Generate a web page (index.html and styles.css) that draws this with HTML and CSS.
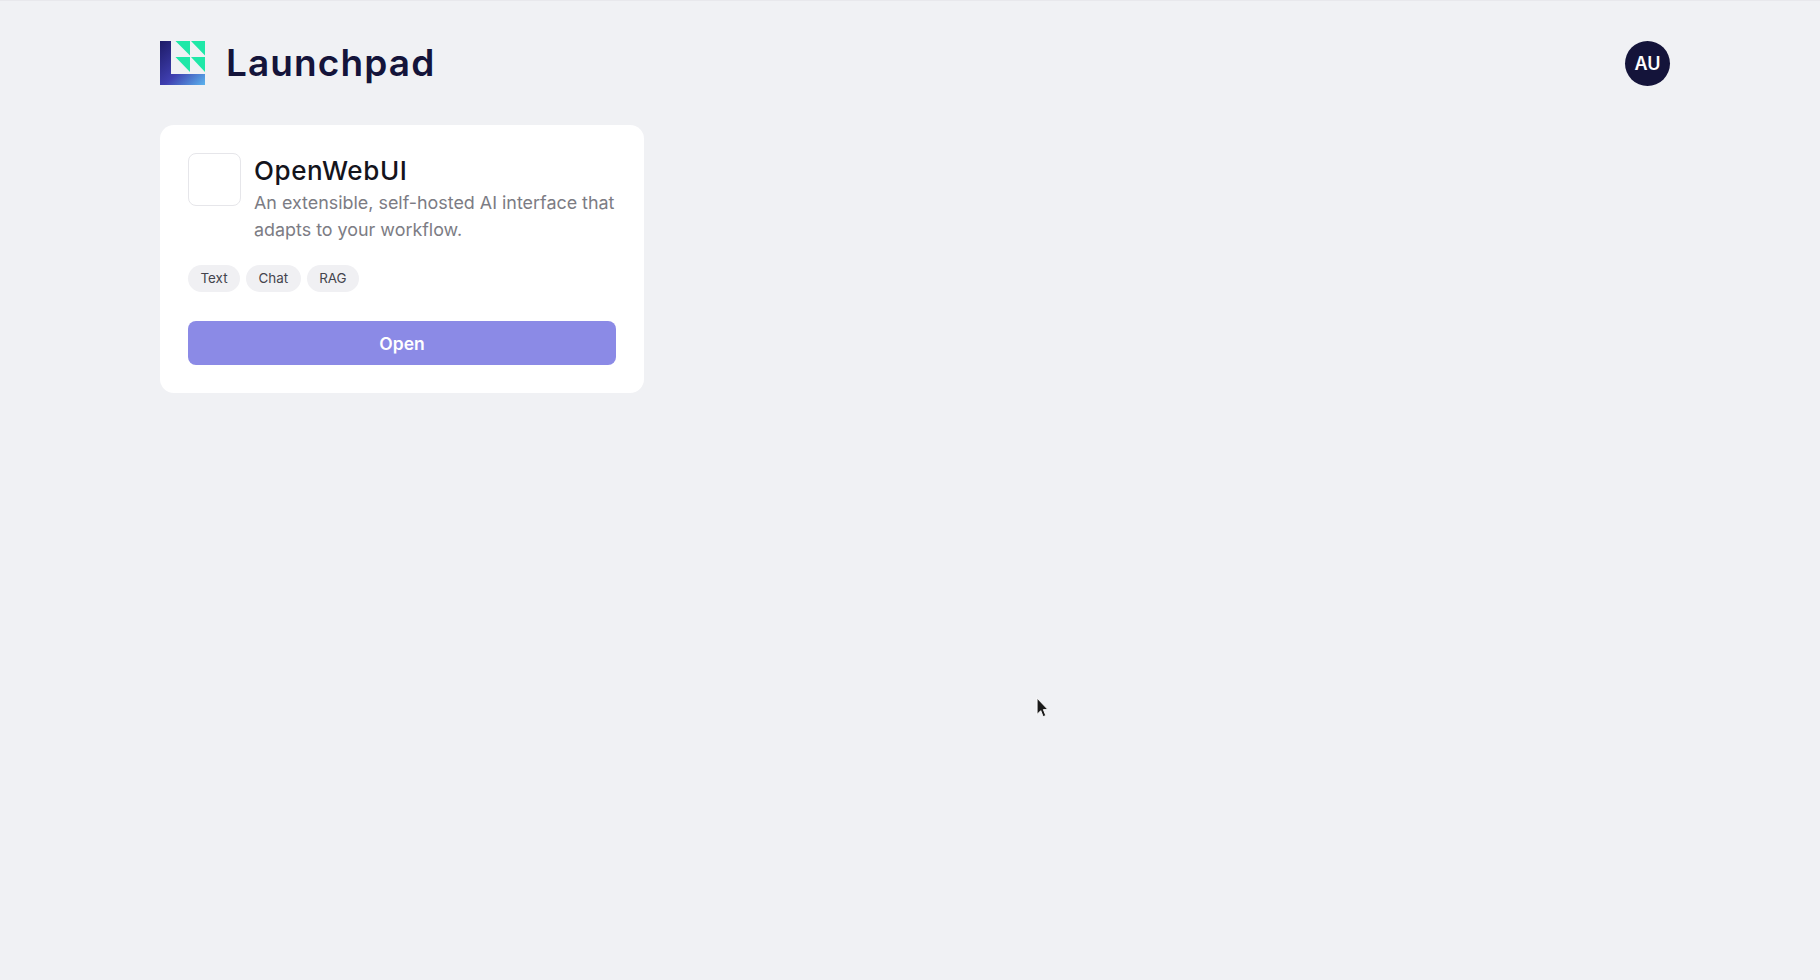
FILE: index.html
```html
<!DOCTYPE html>
<html lang="en">
<head>
    <meta charset="UTF-8">
    <meta name="viewport" content="width=device-width, initial-scale=1.0">
    <title>Launchpad</title>
    <link rel="stylesheet" href="styles.css">
</head>
<body>
    <div class="page">
        <header class="topbar">
            <div class="brand">
                <svg class="brand-logo" viewBox="0 0 45 44" aria-hidden="true">
                    <defs>
                        <linearGradient id="logoFill" x1="0" y1="0" x2="1" y2="1">
                            <stop offset="0" stop-color="#1d1a66"/>
                            <stop offset="0.55" stop-color="#3f3fb0"/>
                            <stop offset="1" stop-color="#5bb4ee"/>
                        </linearGradient>
                    </defs>
                    <path d="M0 0H11V33H45V44H0Z" fill="url(#logoFill)"/>
                    <path d="M15.5 0H30V14.5ZM31 0H45V14.5ZM15.5 16H30V31ZM31 16H45V31Z" fill="#1fe8a8"/>
                </svg>
                <span class="brand-name">Launchpad</span>
            </div>
            <div class="avatar">AU</div>
        </header>

        <main class="app-list">
            <section class="app-card">
                <div class="app-head">
                    <div class="app-icon"></div>
                    <div class="app-info">
                        <h2>OpenWebUI</h2>
                        <p>An extensible, self-hosted AI interface that adapts to your workflow.</p>
                    </div>
                </div>
                <div class="tags">
                    <span class="tag">Text</span>
                    <span class="tag">Chat</span>
                    <span class="tag">RAG</span>
                </div>
                <button class="open-btn" type="button">Open</button>
            </section>
        </main>
    </div>

    <svg class="cursor" viewBox="0 0 12 19" preserveAspectRatio="none" aria-hidden="true">
        <path d="M1 1V15L4.4 11.8L6.6 17L9 16L6.8 10.9H11Z" fill="#1a1a1a" stroke="#ffffff" stroke-width="0.8"/>
    </svg>
</body>
</html>
```

FILE: styles.css
```css
body {
    margin: 0;
    min-height: 979px;
    border-top: 1px solid #e8e8ec;
    background-color: #f0f1f4;
    font-family: 'Inter', sans-serif;
    overflow: hidden;
}
.page {
    padding: 40px 150px 0 160px;
}
.topbar {
    display: flex;
    align-items: center;
    justify-content: space-between;
    height: 44px;
    margin-bottom: 40px;
}
.brand {
    display: flex;
    align-items: center;
    gap: 21px;
}
.brand-logo {
    width: 45px;
    height: 44px;
}
.brand-name {
    font-size: 37px;
    font-weight: 600;
    letter-spacing: 1.1px;
    line-height: 42px;
    color: #14143a;
}
.avatar {
    width: 45px;
    height: 45px;
    border-radius: 50%;
    background-color: #14143a;
    color: #ffffff;
    font-size: 18px;
    font-weight: 600;
    display: flex;
    align-items: center;
    justify-content: center;
}
.app-card {
    width: 428px;
    padding: 28px;
    background-color: #ffffff;
    border-radius: 14px;
}
.app-head {
    display: flex;
    gap: 13px;
}
.app-icon {
    flex: none;
    width: 51px;
    height: 51px;
    border: 1px solid #e6e6ea;
    border-radius: 8px;
}
.app-info h2 {
    margin: 0;
    font-size: 26px;
    font-weight: 500;
    letter-spacing: 0.6px;
    line-height: 36px;
    color: #14141c;
}
.app-info p {
    margin: 0;
    font-size: 17.9px;
    line-height: 27px;
    color: #7c7c84;
}
.tags {
    display: flex;
    gap: 6px;
    margin-top: 22px;
}
.tag {
    padding: 0 12.5px;
    line-height: 27px;
    font-size: 13.4px;
    color: #44444c;
    background-color: #f0f0f3;
    border-radius: 14px;
}
.open-btn {
    display: block;
    width: 100%;
    height: 44px;
    margin-top: 29px;
    border: none;
    border-radius: 8px;
    background-color: #8b8ae6;
    color: #ffffff;
    font-family: inherit;
    font-size: 17.5px;
    font-weight: 600;
}
.cursor {
    position: absolute;
    left: 1036px;
    top: 697px;
    width: 13px;
    height: 22px;
}
```
